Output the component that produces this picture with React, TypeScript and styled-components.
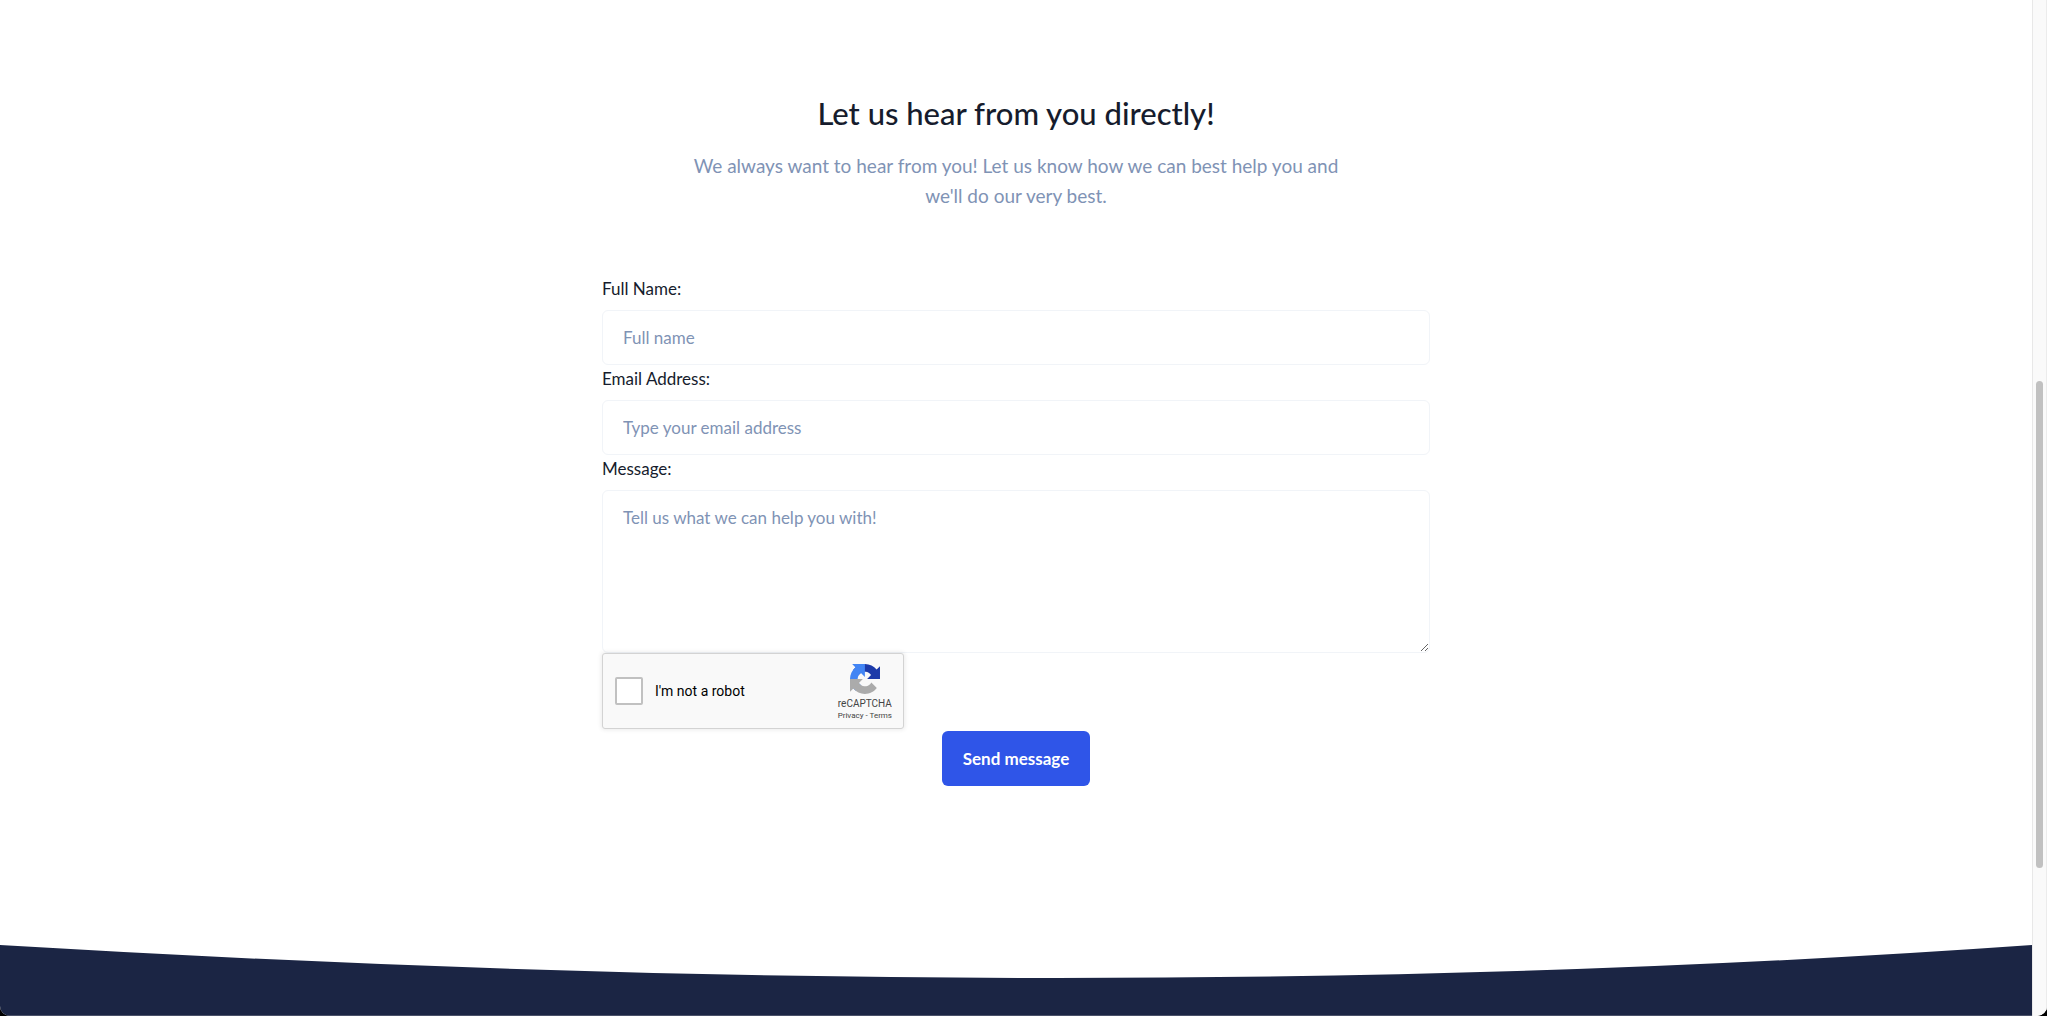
import React from "react";
import styled, { createGlobalStyle } from "styled-components";

const GlobalStyle = createGlobalStyle`
  *, *::before, *::after { box-sizing: border-box; }
  body {
    margin: 0;
    background: #000;
    color: #161c2d;
    font-family: Lato, "Liberation Sans", sans-serif;
    font-size: 17px;
    line-height: 27px;
  }
`;

const Window = styled.div`
  display: flex;
  min-height: 100vh;
  background: #fff;
  border-radius: 0 0 10px 10px;
  overflow: hidden;
`;

const Page = styled.div`
  flex: 1;
  min-width: 0;
  display: flex;
  flex-direction: column;
`;

const Section = styled.main`
  flex: 1;
  display: flex;
  flex-direction: column;
  align-items: center;
  padding: 92px 16px 96px;
`;

const Intro = styled.header`
  max-width: 660px;
  margin-bottom: 64px;
  text-align: center;
`;

const Title = styled.h2`
  margin: 0 0 16px;
  font-size: 31px;
  font-weight: 500;
  line-height: 43px;
`;

const Lead = styled.p`
  margin: 0;
  color: #7f93b5;
  font-size: 19px;
  line-height: 30px;
`;

const Form = styled.form`
  width: 100%;
  max-width: 828px;
  display: flex;
  flex-direction: column;
`;

const Label = styled.label`
  margin-bottom: 8px;
`;

const controlStyle = `
  display: block;
  width: 100%;
  border: 1px solid #f1f4f8;
  border-radius: 6px;
  background: #fff;
  color: #161c2d;
  font: inherit;
  outline: none;
  &::placeholder { color: #7f93b5; opacity: 1; }
`;

const TextInput = styled.input`
  ${controlStyle}
  height: 55px;
  padding: 14px 20px;
`;

const TextArea = styled.textarea`
  ${controlStyle}
  height: 163px;
  padding: 13px 20px;
  resize: vertical;
`;

const Captcha = styled.div`
  display: flex;
  align-items: center;
  width: 302px;
  height: 76px;
  margin-bottom: 2px;
  padding: 0 11px 0 12px;
  border: 1px solid #d3d3d3;
  border-radius: 3px;
  background: #f9f9f9;
  box-shadow: 0 0 4px 1px rgba(0, 0, 0, 0.08);
  color: #000;
  font-family: Roboto, sans-serif;
`;

const CheckBox = styled.input`
  appearance: none;
  width: 28px;
  height: 28px;
  margin: 0 12px 0 0;
  border: 2px solid #c1c1c1;
  border-radius: 2px;
  background: #fff;
`;

const CheckLabel = styled.label`
  flex: 1;
  font-size: 14px;
  font-weight: 400;
  line-height: 17px;
`;

const Brand = styled.div`
  display: flex;
  flex-direction: column;
  align-items: center;
  padding-top: 4px;
  color: #444;
`;

const BrandLogo = styled.svg`
  width: 30px;
  height: 30px;
  margin-bottom: 4px;
`;

const BrandName = styled.span`
  font-size: 10px;
  line-height: 12px;
`;

const BrandLinks = styled.nav`
  font-size: 8px;
  line-height: 12px;
`;

const BrandLink = styled.a`
  color: inherit;
  text-decoration: none;
`;

const Submit = styled.button`
  align-self: center;
  height: 55px;
  padding: 0 21px;
  border: 0;
  border-radius: 6px;
  background: #2f55e8;
  color: #fff;
  font: inherit;
  font-weight: 700;
`;

const Curve = styled.svg`
  display: block;
  width: 100%;
  height: 34px;
  fill: #1b2544;
`;

const FooterTop = styled.footer`
  height: 37px;
  background: #1b2544;
  border-bottom: 1px solid #4a5169;
`;

const ScrollTrack = styled.div`
  width: 15px;
  height: 100vh;
  padding: 381px 3px 0;
  border-left: 1px solid #e8e8e8;
  border-right: 1px solid #ececec;
  background: #fafafa;
`;

const ScrollThumb = styled.div`
  height: 487px;
  border-radius: 4px;
  background: #c1c1c1;
`;

const RecaptchaLogo = () => (
  <BrandLogo viewBox="0 0 64 64" aria-hidden="true">
    <path fill="#1c3aa9" d="M64 31.955l-.033-1.37V4.687l-7.16 7.16C50.902 4.674 42.033.093 32.093.093c-10.344 0-19.534 4.963-25.35 12.65l11.736 11.86a15.55 15.55 0 0 1 4.754-5.334c2.05-1.6 4.952-2.906 8.86-2.906.472 0 .836.055 1.104.16 4.84.382 9.14 3.053 11.663 7.02l-8.307 8.307L64 31.953" />
    <path fill="#4285f4" d="M31.862.094l-1.37.033H4.594l7.16 7.16C4.58 13.147 0 22.016 0 31.956c0 10.344 4.963 19.534 12.65 25.35l11.86-11.736a15.55 15.55 0 0 1-5.334-4.754c-1.6-2.05-2.906-4.952-2.906-8.86 0-.472.055-.836.16-1.104.382-4.84 3.053-9.14 7.02-11.663l8.307 8.307L31.86.095" />
    <path fill="#ababab" d="M.001 31.955l.033 1.37v25.898l7.16-7.16c5.86 7.173 14.73 11.754 24.67 11.754 10.344 0 19.534-4.963 25.35-12.65l-11.736-11.86a15.55 15.55 0 0 1-4.754 5.334c-2.05 1.6-4.952 2.906-8.86 2.906-.472 0-.836-.055-1.104-.16-4.84-.382-9.14-3.053-11.663-7.02l8.307-8.307-37.4-.065" />
  </BrandLogo>
);

export default function App() {
  return (
    <>
      <GlobalStyle />
      <Window>
        <Page>
          <Section>
            <Intro>
              <Title>Let us hear from you directly!</Title>
              <Lead>
                We always want to hear from you! Let us know how we can best help you and we'll do our very best.
              </Lead>
            </Intro>
            <Form onSubmit={(e: React.FormEvent) => e.preventDefault()}>
              <Label htmlFor="name">Full Name:</Label>
              <TextInput id="name" type="text" placeholder="Full name" />
              <Label htmlFor="email">Email Address:</Label>
              <TextInput id="email" type="email" placeholder="Type your email address" />
              <Label htmlFor="message">Message:</Label>
              <TextArea id="message" placeholder="Tell us what we can help you with!" />
              <Captcha>
                <CheckBox id="robot" type="checkbox" />
                <CheckLabel htmlFor="robot">I'm not a robot</CheckLabel>
                <Brand>
                  <RecaptchaLogo />
                  <BrandName>reCAPTCHA</BrandName>
                  <BrandLinks>
                    <BrandLink href="#privacy">Privacy</BrandLink> - <BrandLink href="#terms">Terms</BrandLink>
                  </BrandLinks>
                </Brand>
              </Captcha>
              <Submit type="submit">Send message</Submit>
            </Form>
          </Section>
          <Curve viewBox="0 0 2032 34" preserveAspectRatio="none" aria-hidden="true">
            <path d="M0 0Q1100 66 2032 0V34H0Z" />
          </Curve>
          <FooterTop />
        </Page>
        <ScrollTrack aria-hidden="true">
          <ScrollThumb />
        </ScrollTrack>
      </Window>
    </>
  );
}
